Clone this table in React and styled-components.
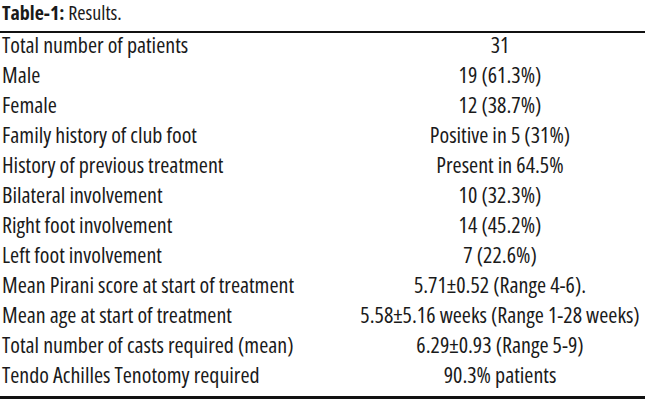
import styled, { createGlobalStyle } from 'styled-components'

const GlobalStyle = createGlobalStyle`
  html, body {
    margin: 0;
    padding: 0;
    background: #ffffff;
  }
`

const rows = [
  ['Total number of patients', '31'],
  ['Male', '19 (61.3%)'],
  ['Female', '12 (38.7%)'],
  ['Family history of club foot', 'Positive in 5 (31%)'],
  ['History of previous treatment', 'Present in 64.5%'],
  ['Bilateral involvement', '10 (32.3%)'],
  ['Right foot involvement', '14 (45.2%)'],
  ['Left foot involvement', '7 (22.6%)'],
  ['Mean Pirani score at start of treatment', '5.71±0.52 (Range 4-6).'],
  ['Mean age at start of treatment', '5.58±5.16 weeks (Range 1-28 weeks)'],
  ['Total number of casts required (mean)', '6.29±0.93 (Range 5-9)'],
  ['Tendo Achilles Tenotomy required', '90.3% patients'],
]

const App = () => {
  return (
    <Wrapper>
      <GlobalStyle />
      <Caption>
        <strong>Table-1:</strong> Results.
      </Caption>
      <Table>
        <tbody>
          {rows.map(([label, value]) => (
            <Row key={label}>
              <LabelCell>{label}</LabelCell>
              <ValueCell>{value}</ValueCell>
            </Row>
          ))}
        </tbody>
      </Table>
    </Wrapper>
  )
}

const Wrapper = styled.div`
  width: 645px;
  font-family: "Open Sans", "Liberation Sans", sans-serif;
  font-stretch: 75%;
  color: #1a1a1a;
`

const Caption = styled.div`
  padding-left: 2px;
  font-size: 20px;
  line-height: 26px;
  height: 31px;
  strong {
    font-weight: 700;
  }
`

const Table = styled.table`
  width: 645px;
  border-collapse: collapse;
  border-top: 2px solid #111;
  border-bottom: 3px solid #111;
`

const Row = styled.tr`
  height: 30px;
  &:last-child td {
    padding-bottom: 10px;
  }
`

const LabelCell = styled.td`
  width: 353px;
  padding: 0 0 7px 2px;
  font-size: 22px;
  line-height: 23px;
  white-space: nowrap;
`

const ValueCell = styled.td`
  padding: 0 0 7px;
  font-size: 22px;
  line-height: 23px;
  text-align: center;
  white-space: nowrap;
`

export default App
